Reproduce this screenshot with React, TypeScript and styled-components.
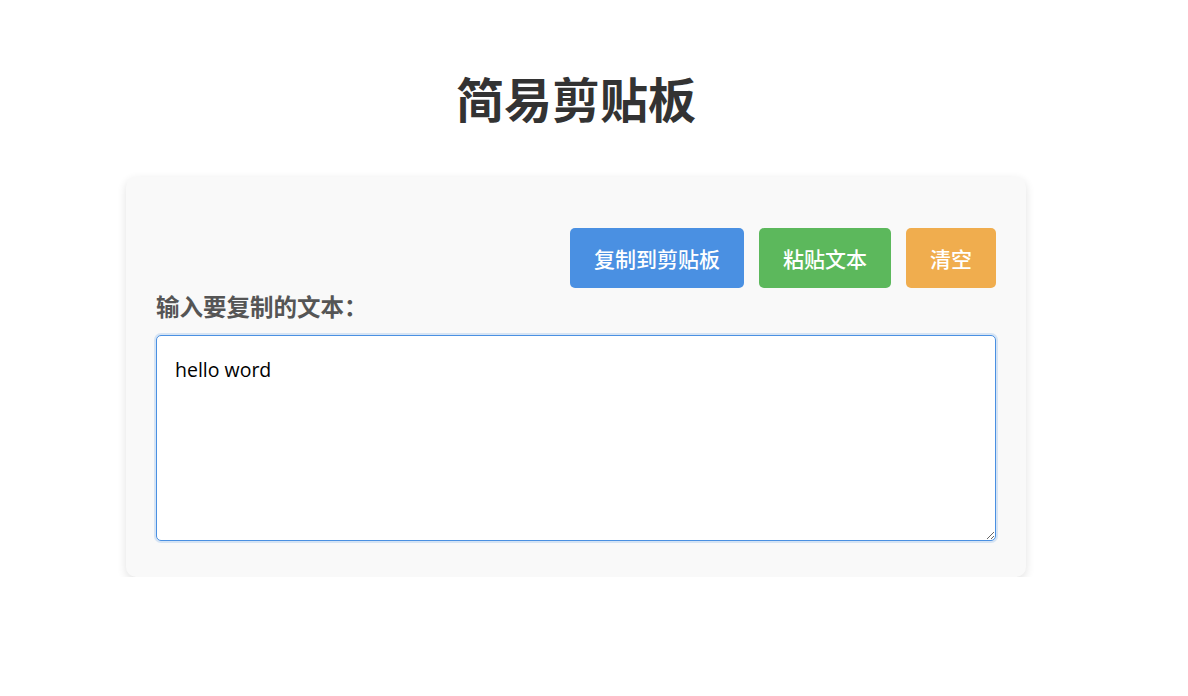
import styled, { createGlobalStyle } from 'styled-components'
import { useState } from 'react'

const GlobalStyle = createGlobalStyle`
  body {
    margin: 0;
    background: #ffffff;
    font-family: "Noto Sans", "Noto Sans CJK SC", sans-serif;
  }
`

const Page = styled.div`
  display: flex;
  flex-direction: column;
  align-items: center;
  padding: 68px 36px 0 0;
`

const Title = styled.h1`
  margin: 0 0 51px;
  font-size: 48px;
  line-height: 58px;
  font-weight: 700;
  color: #333;
  font-family: "Noto Sans CJK SC", sans-serif;
`

const Card = styled.div`
  width: 900px;
  box-sizing: border-box;
  padding: 51px 30px 30px;
  background: #f9f9f9;
  border-radius: 10px;
  box-shadow: 0 3px 10px rgba(0, 0, 0, 0.12);
`

const Toolbar = styled.div`
  display: flex;
  justify-content: flex-end;
  gap: 15px;
`

const Button = styled.button<{ $color: string }>`
  height: 60px;
  padding: 0 24px;
  border: none;
  border-radius: 5px;
  background: ${({ $color }) => $color};
  color: #fff;
  font-family: "Noto Sans CJK SC", sans-serif;
  font-size: 21px;
  font-weight: 500;
  cursor: pointer;
`

const Label = styled.label`
  display: block;
  margin: 3px 0 14px 0;
  font-family: "Noto Sans CJK SC", sans-serif;
  font-size: 23.5px;
  line-height: 30px;
  font-weight: 600;
  color: #555;
`

const TextArea = styled.textarea`
  display: block;
  width: 100%;
  height: 206px;
  box-sizing: border-box;
  padding: 20px 18px;
  border: 1px solid #4a90e2;
  border-radius: 5px;
  outline: none;
  box-shadow: 0 0 0 2px rgba(74, 144, 226, 0.2);
  font-family: "Open Sans", "Noto Sans CJK SC", sans-serif;
  font-size: 19.5px;
  color: #000;
  resize: both;
  margin-bottom: 6px;
`

export default function App() {
  const [text, setText] = useState('hello word')

  return (
    <>
      <GlobalStyle />
      <Page>
        <Title>简易剪贴板</Title>
        <Card>
          <Toolbar>
            <Button $color="#4a90e2">复制到剪贴板</Button>
            <Button $color="#5cb85c">粘贴文本</Button>
            <Button $color="#f0ad4e" onClick={() => setText('')}>清空</Button>
          </Toolbar>
          <Label htmlFor="clip">输入要复制的文本：</Label>
          <TextArea id="clip" value={text} onChange={e => setText(e.target.value)} />
        </Card>
      </Page>
    </>
  )
}
